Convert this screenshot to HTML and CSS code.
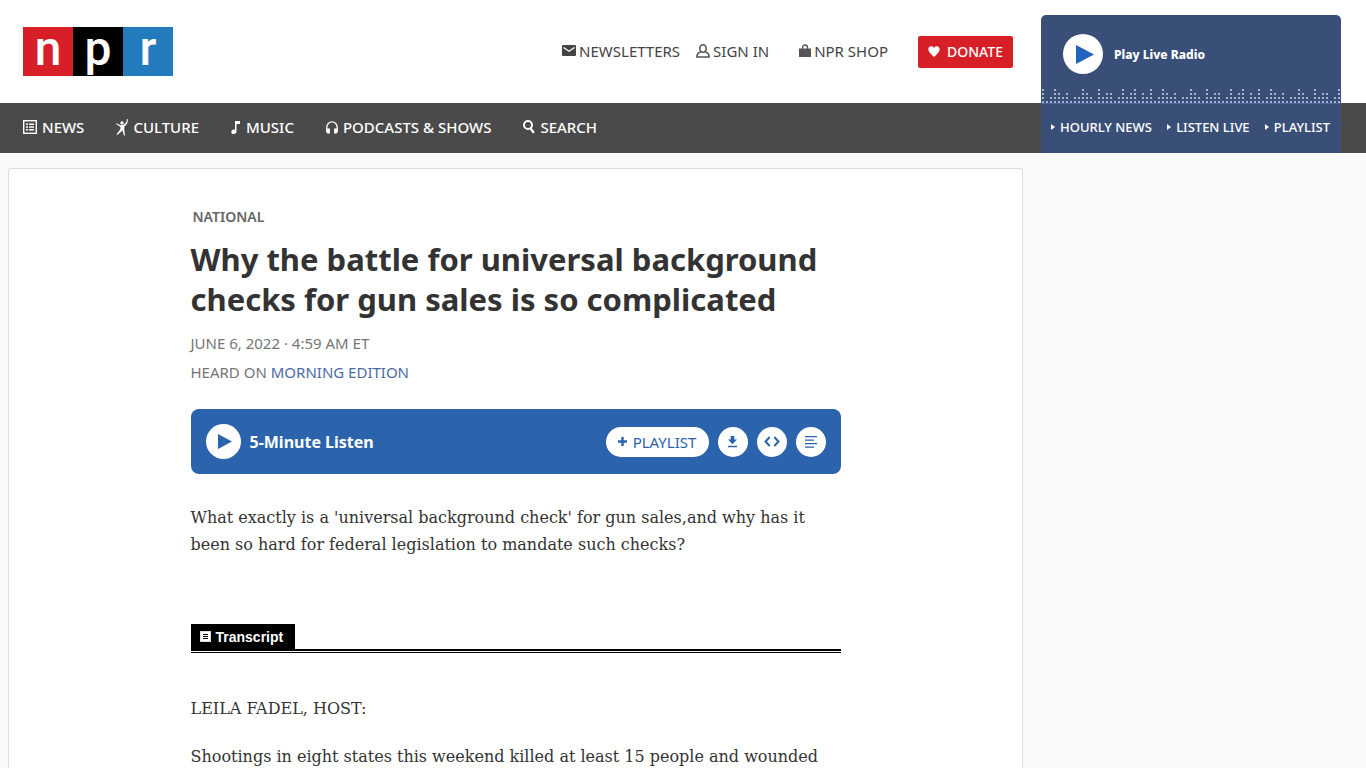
FILE: index.html
```html
<!DOCTYPE html>
<html lang="en">
<head>
<meta charset="utf-8">
<meta name="viewport" content="width=device-width, initial-scale=1">
<title>Why the battle for universal background checks for gun sales is so complicated : NPR</title>
<link rel="stylesheet" href="styles.css">
</head>
<body>
<header class="masthead">
  <div class="topbar">
    <a class="logo" href="#" aria-label="NPR home"><span class="logo-n">n</span><span class="logo-p">p</span><span class="logo-r">r</span></a>
    <nav class="account" aria-label="Account">
      <a href="#" class="account-link newsletters"><svg width="14" height="11" viewBox="0 0 14 11"><rect width="14" height="11" rx="1" fill="#444"/><path d="M1.500 2.500 7 6.200l5.500-3.700" fill="none" stroke="#fff" stroke-width="1.300"/></svg>NEWSLETTERS</a>
      <a href="#" class="account-link signin"><svg width="14" height="14" viewBox="0 0 14 14" fill="none" stroke="#555" stroke-width="1.600"><ellipse cx="7" cy="4.500" rx="3.200" ry="3.700"/><path d="M4.800 7.800C2.500 8.500.9 9.800.9 13h12.200c0-3.200-1.600-4.500-3.900-5.200"/></svg>SIGN IN</a>
      <a href="#" class="account-link shop"><svg width="12" height="13" viewBox="0 0 12 13"><path d="M3.500 6V3.500a2.500 2.500 0 0 1 5 0V6" fill="none" stroke="#555" stroke-width="1.400"/><path d="M0 4.500h12V13H0z" fill="#555"/></svg>NPR SHOP</a>
      <a href="#" class="donate"><svg width="12" height="11" viewBox="0 0 12 11"><path d="M6 11C3 8.300.3 6 .3 3.300.3-.1 4.500-.9 6 1.900 7.500-.9 11.700-.1 11.700 3.300 11.700 6 9 8.300 6 11z" fill="#fff"/></svg>DONATE</a>
    </nav>
  </div>
  <nav class="mainnav" aria-label="Main">
    <a href="#"><svg width="14" height="14" viewBox="0 0 14 14" fill="none" stroke="#fff"><rect x=".7" y=".7" width="12.600" height="12.600" stroke-width="1.400"/><path d="M3 4.200h2M3 7h2M3 9.800h2M6 4.200h5M6 7h5M6 9.800h5" stroke-width="1.500"/></svg>NEWS</a>
    <a href="#"><svg width="12" height="17" viewBox="0 0 12 17" fill="#fff"><circle cx="6" cy="3.900" r="1.700"/><path d="M.2 4.300 4.600 6.200 7.700 5.700C9.600 4.500 10.600 3 11 0h.8c.2 3.500-.8 5.700-3.300 7.300l-.3 3.200.8 6H7.900L6.500 11.600 1.300 15.900.6 15.200 4.300 10.300 4.500 7.900.1 5z"/></svg>CULTURE</a>
    <a href="#"><svg width="10" height="13" viewBox="0 0 10 13" fill="#fff"><path d="M4 0h5v3H5.500v7.200C5.500 12 4.400 13 2.700 13 1.200 13 .3 12.100.3 10.900.3 9.200 2 8.200 4 8.800z"/></svg>MUSIC</a>
    <a href="#"><svg width="12" height="13" viewBox="0 0 12 13"><path d="M.8 11V6.300a5.200 5.400 0 0 1 10.400 0V11" fill="none" stroke="#fff" stroke-width="1.300"/><path d="M.2 7.500h3.700V12.500H1.500L.2 11zM11.800 7.500H8.100V12.500h2.400l1.300-1.500z" fill="#fff"/></svg>PODCASTS &amp; SHOWS</a>
    <a href="#"><svg width="12" height="14" viewBox="0 0 12 14" fill="none" stroke="#fff"><circle cx="5" cy="5" r="4" stroke-width="1.900"/><path d="m7.300 8 3.500 4.900" stroke-width="2.300"/></svg>SEARCH</a>
  </nav>
  <section class="radio" aria-label="Live radio">
    <button class="radio-play" type="button"><span class="disc disc-large"><svg width="18" height="19" viewBox="0 0 18 19"><path d="M0 0 18 9.500 0 19z" fill="#2362bd"/></svg></span>Play Live Radio</button>
    <svg class="wave" width="100%" height="14" aria-hidden="true">
      <defs><pattern id="bars" width="108" height="14" patternUnits="userSpaceOnUse"><path stroke="#a4b3d2" stroke-width="2" stroke-dasharray="2 2" fill="none" d="M2 14v-14M6 14v-2M10 14v-6M14 14v-14M18 14v-10M22 14v-6M26 14v-10M30 14v-2M34 14v-6M38 14v-6M42 14v-14M46 14v-10M50 14v-6M54 14v-2M58 14v-14M62 14v-6M66 14v-10M70 14v-10M74 14v-2M78 14v-6M82 14v-14M86 14v-6M90 14v-10M94 14v-14M98 14v-2M102 14v-10M106 14v-6"/></pattern></defs>
      <rect width="100%" height="14" fill="url(#bars)"/>
    </svg>
    <div class="radio-links"><a href="#">HOURLY NEWS</a><a href="#">LISTEN LIVE</a><a href="#">PLAYLIST</a></div>
  </section>
</header>
<main class="page">
  <div class="card">
    <article class="story">
      <a class="slug" href="#">NATIONAL</a>
      <h1>Why the battle for universal background checks for gun sales is so complicated</h1>
      <p class="meta"><time datetime="2022-06-06T04:59">JUNE 6, 2022 · 4:59 AM ET</time></p>
      <p class="meta">HEARD ON <a href="#">MORNING EDITION</a></p>
      <section class="player" aria-label="Audio">
        <button class="listen" type="button"><span class="disc disc-medium"><svg width="14" height="15" viewBox="0 0 14 15"><path d="M0 0 14 7.500 0 15z" fill="#2b63ad"/></svg></span>5-Minute Listen</button>
        <div class="tools">
          <button class="add" type="button"><svg width="9" height="9" viewBox="0 0 9 9"><path d="M4.500 0v9M0 4.500h9" stroke="#2b63ad" stroke-width="2.400"/></svg>PLAYLIST</button>
          <button class="tool" type="button" aria-label="Download"><svg width="11" height="12" viewBox="0 0 11 12" fill="#2b63ad"><path d="M3.700 0h3.600v3.500H10L5.500 8.200 1 3.500h2.700zM1 9.800h9v1.500H1z"/></svg></button>
          <button class="tool" type="button" aria-label="Embed"><svg width="16" height="11" viewBox="0 0 16 11" fill="none" stroke="#2b63ad" stroke-width="2"><path d="M5.700 1 1.500 5.500l4.200 4.500M10.300 1l4.200 4.500-4.200 4.500"/></svg></button>
          <button class="tool" type="button" aria-label="Transcript"><svg width="12" height="12" viewBox="0 0 12 12" stroke="#2b63ad" stroke-width="1.300"><path d="M0 .7h12M0 4.200h9M0 7.700h12M0 11.200h9"/></svg></button>
        </div>
      </section>
      <p class="lede">What exactly is a 'universal background check' for gun sales,and why has it been so hard for federal legislation to mandate such checks?</p>
      <div class="tabbar"><h2 class="tab"><svg width="11" height="11" viewBox="0 0 11 11"><rect width="11" height="11" fill="#ddd"/><path fill="#fff" d="M1 1h9v9H1z"/><path d="M3 3.500h5M3 5.500h5M3 7.500h5" stroke="#000"/></svg>Transcript</h2></div>
      <div class="transcript">
        <p>LEILA FADEL, HOST:</p>
        <p>Shootings in eight states this weekend killed at least 15 people and wounded</p>
      </div>
    </article>
  </div>
</main>
</body>
</html>
```
FILE: styles.css
```css
* { box-sizing: border-box; }
body {
  margin: 0;
  height: 100vh;
  overflow: hidden;
  display: flex;
  flex-direction: column;
  background: #f9f9f9;
  color: #333;
  font-family: "Noto Sans", sans-serif;
  font-size: 15px;
}
a { color: inherit; text-decoration: none; }
button { border: 0; padding: 0; margin: 0; font: inherit; cursor: pointer; }
svg { display: block; flex: none; }

.masthead {
  flex: none;
  display: grid;
  grid-template-columns: minmax(0, 1fr) 300px 25px;
  grid-template-rows: 103px 50px;
}
.topbar {
  grid-area: 1 / 1 / 2 / -1;
  display: flex;
  align-items: center;
  justify-content: space-between;
  padding: 0 353px 0 23px;
  background: #fff;
}
.logo {
  display: flex;
  color: #fff;
  font-family: Roboto, sans-serif;
  font-size: 48px;
  font-weight: 500;
  line-height: 43px;
  text-align: center;
}
.logo span { width: 50px; height: 49px; }
.logo-n { background: #d61f26; }
.logo-p { background: #000; }
.logo-r { background: #237bbd; }
.account { display: flex; align-items: center; color: #444; }
.account-link { display: flex; align-items: center; gap: 3px; padding-bottom: 2px; }
.newsletters { margin-right: 16px; }
.signin { margin-right: 30px; }
.shop { margin-right: 30px; }
.donate {
  display: flex;
  align-items: center;
  justify-content: center;
  gap: 7px;
  width: 95px;
  height: 32px;
  border-radius: 2px;
  background: #d61f26;
  color: #fff;
  font-size: 14px;
  font-weight: 500;
}
.mainnav {
  grid-area: 2 / 1 / 3 / -1;
  display: flex;
  align-items: center;
  gap: 32px;
  padding: 0 0 2px 23px;
  background: #4a4a4a;
  color: #fff;
  font-weight: 500;
}
.mainnav a { display: flex; align-items: center; gap: 5px; }

.radio {
  grid-area: 1 / 2 / 3 / 3;
  display: flex;
  flex-direction: column;
  margin-top: 15px;
  border-radius: 5px 5px 0 0;
  background: #3a4f78;
  color: #fff;
  font-size: 13px;
  font-weight: 500;
}
.radio-play {
  display: flex;
  align-items: center;
  gap: 11px;
  padding: 19px 22px 15px;
  background: none;
  color: #fff;
  font-size: 12px;
  font-weight: 800;
}
.disc {
  display: flex;
  align-items: center;
  justify-content: center;
  border-radius: 50%;
  background: #fff;
}
.disc-large { width: 40px; height: 40px; padding-left: 4px; }
.disc-medium { width: 35px; height: 35px; padding-left: 3px; }
.radio-links {
  flex: 1;
  display: flex;
  align-items: center;
  justify-content: space-between;
  padding: 0 11px 3px 10px;
  border-top: 1px solid #4a669b;
}
.radio-links a { display: flex; align-items: center; gap: 5px; }
.radio-links a::before {
  content: "";
  border: solid transparent;
  border-width: 3px 0 3px 4px;
  border-left-color: #fff;
}

.page { flex: 1; min-height: 0; padding: 15px 343px 0 8px; }
.card {
  height: 100%;
  overflow: hidden;
  padding: 38px 24px 0;
  border: 1px solid #ddd;
  border-bottom: 0;
  border-radius: 3px 3px 0 0;
  background: #fff;
}
.story { max-width: 650px; margin: 0 auto; }
.slug {
  display: block;
  padding-left: 2px;
  color: #666;
  font-size: 14px;
  font-weight: 600;
  line-height: 20px;
}
h1 {
  margin: 12px 0 10px;
  font-size: 31px;
  font-weight: 700;
  line-height: 40px;
}
.meta { margin: 0; color: #767676; line-height: 29px; }
.meta a { color: #4a6ba8; }
.player {
  display: flex;
  align-items: center;
  justify-content: space-between;
  height: 65px;
  margin: 22px 0 30px;
  padding: 0 15px;
  border-radius: 8px;
  background: #2b63ad;
}
.listen {
  display: flex;
  align-items: center;
  gap: 9px;
  background: none;
  color: #fff;
  font-size: 16px;
  font-weight: 700;
}
.tools { display: flex; gap: 9px; }
.add, .tool {
  display: flex;
  align-items: center;
  justify-content: center;
  gap: 6px;
  height: 30px;
  border-radius: 15px;
  background: #fff;
  color: #2b63ad;
}
.add { width: 103px; }
.tool { width: 30px; }
.lede, .transcript {
  font-family: "DejaVu Serif", serif;
  font-size: 16px;
  line-height: 27px;
}
.lede { margin: 0 0 66px; }
.tabbar {
  display: flex;
  border-bottom: 2px solid #000;
  box-shadow: 0 1px #fff, 0 2px #000;
}
.tab {
  display: flex;
  align-items: center;
  gap: 5px;
  height: 25px;
  margin: 0;
  padding: 0 12px 0 9px;
  background: #000;
  color: #fff;
  font-family: "Liberation Sans", sans-serif;
  font-size: 14px;
}
.transcript { padding-top: 44px; }
.transcript p { margin: 0 0 21px; }
```
